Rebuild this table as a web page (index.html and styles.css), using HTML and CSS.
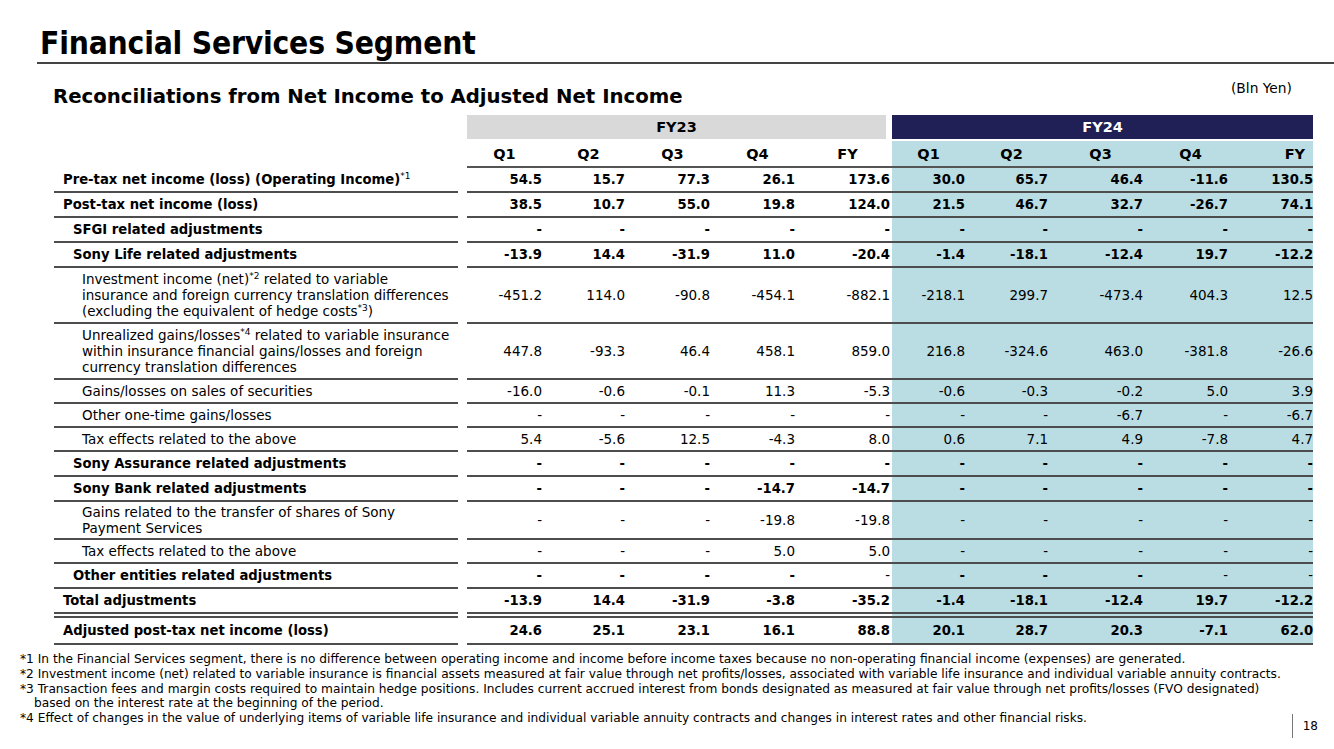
FILE: index.html
```html
<!DOCTYPE html>
<html lang="en">
<head>
<meta charset="utf-8">
<title>Financial Services Segment</title>
<link rel="stylesheet" href="styles.css">
</head>
<body>
<div class="slide">
  <header class="title-bar">
    <h1 class="title">Financial Services Segment</h1>
  </header>
  <div class="subhead">
    <h2 class="subtitle">Reconciliations from Net Income to Adjusted Net Income</h2>
    <span class="unit">(Bln Yen)</span>
  </div>
  <table class="recon">
    <colgroup>
      <col class="c-label"><col class="c-gap">
      <col class="c85"><col class="c83"><col class="c85"><col class="c85"><col class="c87">
      <col class="c83"><col class="c83"><col class="c95"><col class="c85"><col class="c75">
    </colgroup>
    <thead>
      <tr class="band-row">
        <th class="blank"></th><th class="gap"></th>
        <th colspan="5" class="band fy23">FY23</th>
        <th colspan="5" class="band fy24">FY24</th>
      </tr>
      <tr class="q-row">
        <th class="blank"></th><th class="gap"></th>
        <th>Q1</th><th>Q2</th><th>Q3</th><th>Q4</th><th class="fy">FY</th>
        <th class="t">Q1</th><th class="t">Q2</th><th class="t">Q3</th><th class="t">Q4</th><th class="t fy last">FY</th>
      </tr>
    </thead>
    <tbody>
      <tr class="b">
        <td class="lbl l0">Pre-tax net income (loss) (Operating Income)<sup>*1</sup></td><td class="gap"></td>
        <td>54.5</td><td>15.7</td><td>77.3</td><td>26.1</td><td class="fy">173.6</td>
        <td class="t">30.0</td><td class="t">65.7</td><td class="t">46.4</td><td class="t">-11.6</td><td class="t fy last">130.5</td>
      </tr>
      <tr class="b">
        <td class="lbl l0">Post-tax net income (loss)</td><td class="gap"></td>
        <td>38.5</td><td>10.7</td><td>55.0</td><td>19.8</td><td class="fy">124.0</td>
        <td class="t">21.5</td><td class="t">46.7</td><td class="t">32.7</td><td class="t">-26.7</td><td class="t fy last">74.1</td>
      </tr>
      <tr class="b">
        <td class="lbl l1">SFGI related adjustments</td><td class="gap"></td>
        <td>-</td><td>-</td><td>-</td><td>-</td><td class="fy">-</td>
        <td class="t">-</td><td class="t">-</td><td class="t">-</td><td class="t">-</td><td class="t fy last">-</td>
      </tr>
      <tr class="b">
        <td class="lbl l1">Sony Life related adjustments</td><td class="gap"></td>
        <td>-13.9</td><td>14.4</td><td>-31.9</td><td>11.0</td><td class="fy">-20.4</td>
        <td class="t">-1.4</td><td class="t">-18.1</td><td class="t">-12.4</td><td class="t">19.7</td><td class="t fy last">-12.2</td>
      </tr>
      <tr class="multi">
        <td class="lbl l2">Investment income (net)<sup>*2</sup> related to variable<br>insurance and foreign currency translation differences<br>(excluding the equivalent of hedge costs<sup>*3</sup>)</td><td class="gap"></td>
        <td>-451.2</td><td>114.0</td><td>-90.8</td><td>-454.1</td><td class="fy">-882.1</td>
        <td class="t">-218.1</td><td class="t">299.7</td><td class="t">-473.4</td><td class="t">404.3</td><td class="t fy last">12.5</td>
      </tr>
      <tr class="multi">
        <td class="lbl l2">Unrealized gains/losses<sup>*4</sup> related to variable insurance<br>within insurance financial gains/losses and foreign<br>currency translation differences</td><td class="gap"></td>
        <td>447.8</td><td>-93.3</td><td>46.4</td><td>458.1</td><td class="fy">859.0</td>
        <td class="t">216.8</td><td class="t">-324.6</td><td class="t">463.0</td><td class="t">-381.8</td><td class="t fy last">-26.6</td>
      </tr>
      <tr>
        <td class="lbl l2">Gains/losses on sales of securities</td><td class="gap"></td>
        <td>-16.0</td><td>-0.6</td><td>-0.1</td><td>11.3</td><td class="fy">-5.3</td>
        <td class="t">-0.6</td><td class="t">-0.3</td><td class="t">-0.2</td><td class="t">5.0</td><td class="t fy last">3.9</td>
      </tr>
      <tr>
        <td class="lbl l2">Other one-time gains/losses</td><td class="gap"></td>
        <td>-</td><td>-</td><td>-</td><td>-</td><td class="fy">-</td>
        <td class="t">-</td><td class="t">-</td><td class="t">-6.7</td><td class="t">-</td><td class="t fy last">-6.7</td>
      </tr>
      <tr>
        <td class="lbl l2">Tax effects related to the above</td><td class="gap"></td>
        <td>5.4</td><td>-5.6</td><td>12.5</td><td>-4.3</td><td class="fy">8.0</td>
        <td class="t">0.6</td><td class="t">7.1</td><td class="t">4.9</td><td class="t">-7.8</td><td class="t fy last">4.7</td>
      </tr>
      <tr class="b">
        <td class="lbl l1">Sony Assurance related adjustments</td><td class="gap"></td>
        <td>-</td><td>-</td><td>-</td><td>-</td><td class="fy">-</td>
        <td class="t">-</td><td class="t">-</td><td class="t">-</td><td class="t">-</td><td class="t fy last">-</td>
      </tr>
      <tr class="b">
        <td class="lbl l1">Sony Bank related adjustments</td><td class="gap"></td>
        <td>-</td><td>-</td><td>-</td><td>-14.7</td><td class="fy">-14.7</td>
        <td class="t">-</td><td class="t">-</td><td class="t">-</td><td class="t">-</td><td class="t fy last">-</td>
      </tr>
      <tr class="multi two">
        <td class="lbl l2">Gains related to the transfer of shares of Sony<br>Payment Services</td><td class="gap"></td>
        <td>-</td><td>-</td><td>-</td><td>-19.8</td><td class="fy">-19.8</td>
        <td class="t">-</td><td class="t">-</td><td class="t">-</td><td class="t">-</td><td class="t fy last">-</td>
      </tr>
      <tr>
        <td class="lbl l2">Tax effects related to the above</td><td class="gap"></td>
        <td>-</td><td>-</td><td>-</td><td>5.0</td><td class="fy">5.0</td>
        <td class="t">-</td><td class="t">-</td><td class="t">-</td><td class="t">-</td><td class="t fy last">-</td>
      </tr>
      <tr class="b">
        <td class="lbl l1">Other entities related adjustments</td><td class="gap"></td>
        <td>-</td><td>-</td><td>-</td><td>-</td><td class="fy reg">-</td>
        <td class="t">-</td><td class="t">-</td><td class="t">-</td><td class="t reg">-</td><td class="t fy last reg">-</td>
      </tr>
      <tr class="b total">
        <td class="lbl l0">Total adjustments</td><td class="gap"></td>
        <td>-13.9</td><td>14.4</td><td>-31.9</td><td>-3.8</td><td class="fy">-35.2</td>
        <td class="t">-1.4</td><td class="t">-18.1</td><td class="t">-12.4</td><td class="t">19.7</td><td class="t fy last">-12.2</td>
      </tr>
      <tr class="b final">
        <td class="lbl l0">Adjusted post-tax net income (loss)</td><td class="gap"></td>
        <td>24.6</td><td>25.1</td><td>23.1</td><td>16.1</td><td class="fy">88.8</td>
        <td class="t">20.1</td><td class="t">28.7</td><td class="t">20.3</td><td class="t">-7.1</td><td class="t fy last">62.0</td>
      </tr>
    </tbody>
  </table>
  <div class="foot">
    <div class="notes">
      <p>*1 In the Financial Services segment, there is no difference between operating income and income before income taxes because no non-operating financial income (expenses) are generated.</p>
      <p>*2 Investment income (net) related to variable insurance is financial assets measured at fair value through net profits/losses, associated with variable life insurance and individual variable annuity contracts.</p>
      <p>*3 Transaction fees and margin costs required to maintain hedge positions. Includes current accrued interest from bonds designated as measured at fair value through net profits/losses (FVO designated)<br>based on the interest rate at the beginning of the period.</p>
      <p>*4 Effect of changes in the value of underlying items of variable life insurance and individual variable annuity contracts and changes in interest rates and other financial risks.</p>
    </div>
    <div class="page-num">18</div>
  </div>
</div>
</body>
</html>
```

FILE: styles.css
```css
html, body {
  margin: 0;
  padding: 0;
  background: #ffffff;
}

.slide {
  width: 1334px;
  height: 749px;
  overflow: hidden;
  color: #000;
  font-family: "DejaVu Sans", sans-serif;
}

.title-bar {
  margin-left: 37px;
  border-bottom: 2px solid #444;
}

.title {
  margin: 0;
  padding: 24px 0 0 3px;
  font-family: "DejaVu Sans Condensed", "DejaVu Sans", sans-serif;
  font-stretch: condensed;
  font-weight: bold;
  font-size: 31.5px;
  line-height: 38px;
  letter-spacing: -0.2px;
}

.subhead {
  display: flex;
  justify-content: space-between;
  align-items: flex-start;
  padding: 16px 42px 0 53px;
  height: 35px;
}

.subtitle {
  margin: 5px 0 0 0;
  font-weight: bold;
  font-size: 19.7px;
  line-height: 24px;
}

.unit {
  font-size: 13.8px;
  line-height: 16px;
}

.recon {
  margin-left: 54px;
  border-collapse: separate;
  border-spacing: 0;
  table-layout: fixed;
  width: 1259px;
  font-size: 13.5px;
  line-height: 16px;
}

.c-label { width: 404px; }
.c-gap { width: 9px; }
.c75 { width: 75px; }
.c83 { width: 83px; }
.c85 { width: 85px; }
.c87 { width: 87px; }
.c95 { width: 95px; }

.recon th,
.recon td {
  padding: 0;
  white-space: nowrap;
}

.band-row th {
  height: 24px;
  border-bottom: 2px solid #fff;
  font-size: 14.5px;
  font-weight: bold;
  text-align: center;
  vertical-align: middle;
}

.band.fy23 {
  background: #d9d9d9;
  border-right: 6px solid #fff;
}

.band.fy24 {
  background: #202057;
  color: #fff;
}

.q-row th {
  height: 24px;
  padding: 1px 10px 0 0;
  font-size: 14.5px;
  font-weight: bold;
  text-align: center;
  border-bottom: 2px solid #555;
}

.q-row th.fy { padding-right: 2px; }
.q-row th.last { text-align: right; padding-right: 8px; }
.q-row th.blank,
.q-row th.gap { border-bottom: none; }

.recon tbody td {
  padding: 3px 10px 3px 0;
  text-align: right;
  vertical-align: middle;
  border-bottom: 2px solid #4d4d4d;
}

.recon tbody tr.b td { padding-top: 4px; }
.recon tbody tr.multi td { padding-top: 3px; padding-bottom: 3px; }
.recon tbody tr.two td { padding-top: 2px; padding-bottom: 2px; }
.recon tbody tr.final td { padding-top: 5px; padding-bottom: 4px; }

.recon tbody td.fy { padding-right: 2px; }
.recon tbody td.last { padding-right: 0; }

.recon .t {
  background: #b9dde2;
}

.recon td.gap,
.recon th.gap {
  border-bottom: none;
  background: transparent;
}

.recon td.lbl {
  text-align: left;
}

.recon td.l0 { padding-left: 9px; }
.recon td.l1 { padding-left: 19px; }
.recon td.l2 { padding-left: 28px; }

.b td {
  font-weight: bold;
  font-size: 13.2px;
}
.b td.reg { font-weight: normal; }

.recon tbody tr.total td { border-bottom: 6px double #4d4d4d; }
.recon tbody tr.total td.gap { border-bottom: none; }

sup {
  font-size: 9px;
  line-height: 0;
  vertical-align: 5px;
  font-weight: normal;
}

.foot {
  display: flex;
  align-items: flex-end;
  padding: 7px 16px 0 20px;
}

.notes {
  flex: 1;
  font-size: 12.2px;
  line-height: 14.75px;
}

.notes p {
  margin: 0;
  padding-left: 14px;
  text-indent: -14px;
  white-space: nowrap;
}

.page-num {
  margin-bottom: -12px;
  padding: 4px 0 4px 10px;
  border-left: 1.5px solid #777;
  font-size: 12px;
  line-height: 16px;
}
```
